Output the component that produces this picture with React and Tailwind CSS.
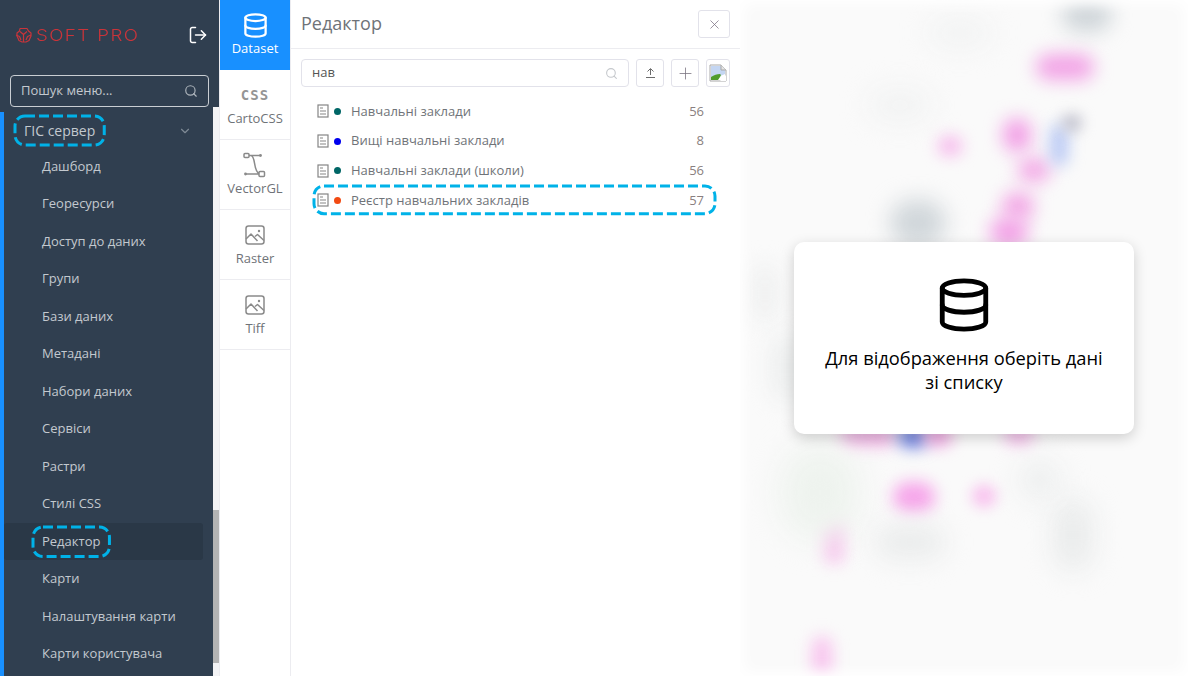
import React from 'react'
import { ChevronDown, Database, LogOut, Plus, Search, X } from 'lucide-react'

const menu = ['Дашборд', 'Георесурси', 'Доступ до даних', 'Групи', 'Бази даних', 'Метадані', 'Набори даних', 'Сервіси', 'Растри', 'Стилі CSS', 'Редактор', 'Карти', 'Налаштування карти', 'Карти користувача']

const rows = [
    { name: 'Навчальні заклади', count: 56, dot: 'bg-[#006666]' },
    { name: 'Вищі навчальні заклади', count: 8, dot: 'bg-[#0000ee]' },
    { name: 'Навчальні заклади (школи)', count: 56, dot: 'bg-[#006666]' },
    { name: 'Реєстр навчальних закладів', count: 57, dot: 'bg-[#f24a12]', marked: true },
]

const blobs = [
    'left-[322px] top-[-2px] w-[50px] h-[34px] bg-[#d0d6da] blur-[10px]',
    'left-[296px] top-[54px] w-[58px] h-[26px] bg-[#f2a4e6] blur-[9px]',
    'left-[263px] top-[118px] w-[28px] h-[34px] bg-[#f2a0e6] blur-[9px]',
    'left-[198px] top-[136px] w-[24px] h-[20px] bg-[#f6b8ec] blur-[8px]',
    'left-[278px] top-[158px] w-[32px] h-[24px] bg-[#f3a8e6] blur-[9px]',
    'left-[310px] top-[124px] w-[18px] h-[42px] bg-[#b8c8f4] blur-[8px]',
    'left-[322px] top-[114px] w-[20px] h-[18px] bg-[#c0c0cc] blur-[7px]',
    'left-[262px] top-[192px] w-[32px] h-[28px] bg-[#f3a8e6] blur-[9px]',
    'left-[250px] top-[218px] w-[38px] h-[28px] bg-[#f2a0e6] blur-[9px]',
    'left-[150px] top-[200px] w-[56px] h-[46px] bg-[#d0d6da] blur-[11px]',
    'left-[12px] top-[265px] w-[26px] h-[56px] bg-[#eff0f0] blur-[11px]',
    'left-[32px] top-[335px] w-[32px] h-[66px] bg-[#eceeee] blur-[12px]',
    'left-[100px] top-[426px] w-[56px] h-[20px] bg-[#f0b0e4] blur-[8px]',
    'left-[158px] top-[426px] w-[30px] h-[22px] bg-[#6b7fe0] blur-[8px]',
    'left-[184px] top-[426px] w-[28px] h-[20px] bg-[#ee9fdf] blur-[8px]',
    'left-[264px] top-[426px] w-[30px] h-[18px] bg-[#f3b6e8] blur-[8px]',
    'left-[153px] top-[482px] w-[42px] h-[30px] bg-[#f6a6ea] blur-[8px]',
    'left-[232px] top-[485px] w-[24px] h-[22px] bg-[#f8c0ee] blur-[7px]',
    'left-[84px] top-[520px] w-[20px] h-[44px] bg-[#f8c4ee] blur-[8px]',
    'left-[72px] top-[636px] w-[20px] h-[44px] bg-[#f8c4ee] blur-[8px]',
    'left-[40px] top-[445px] w-[80px] h-[95px] bg-[#eef3ee] blur-[16px]',
    'left-[135px] top-[525px] w-[70px] h-[34px] bg-[#eaecec] blur-[13px]',
    'left-[315px] top-[500px] w-[36px] h-[70px] bg-[#e8eaea] blur-[14px]',
    'left-[280px] top-[460px] w-[40px] h-[40px] bg-[#eceeee] blur-[14px]',
    'left-[130px] top-[90px] w-[60px] h-[30px] bg-[#f1f2f2] blur-[14px]',
    'left-[190px] top-[20px] w-[60px] h-[26px] bg-[#f1f2f2] blur-[14px]',
]

// annotation frame drawn over the highlighted items
function Dashed({ className }) {
    return (
        <span className={`absolute ${className}`}>
            <svg className="w-full h-full overflow-visible text-[#00b2e8]">
                <rect x="0" y="0" width="100%" height="100%" rx="10" fill="none" stroke="currentColor" strokeWidth="3" strokeDasharray="10 4" />
            </svg>
        </span>
    )
}

function DocIcon() {
    return (
        <svg width="12" height="14" viewBox="0 0 12 14" fill="none" className="shrink-0 text-[#858585]" stroke="currentColor">
            <rect x="1" y="1" width="10" height="12" strokeWidth="1.2" />
            <path d="M3 4h3M3 7h6M3 10h6" strokeWidth="1" />
        </svg>
    )
}

function PictureIcon() {
    return (
        <svg width="20" height="20" viewBox="0 0 20 20" fill="none" stroke="#8a8a8a" strokeWidth="1.500" strokeLinejoin="round">
            <rect x="1" y="1" width="18" height="18" rx="2.500" />
            <path d="M1 14l5-5 6.500 7M10 11.500l2.500-2 6.500 6" />
            <circle cx="14" cy="6" r="1.200" fill="#8a8a8a" stroke="none" />
        </svg>
    )
}

function NodesIcon() {
    return (
        <svg width="24" height="26" viewBox="0 0 24 26" fill="none" stroke="#8a8a8a" strokeWidth="1.500">
            <rect x="1" y="1.500" width="5" height="4" rx="1" />
            <rect x="16" y="19.500" width="5.500" height="5" rx="1" />
            <path d="M6 3.500h11M3 22h13M8 3.500c5 1 2 15 8 18" />
            <circle cx="17.500" cy="3.500" r="1.400" fill="#8a8a8a" stroke="none" />
            <circle cx="2.500" cy="22" r="1.400" fill="#8a8a8a" stroke="none" />
        </svg>
    )
}

function BrokenImage() {
    return (
        <svg width="18" height="18" viewBox="0 0 18 18">
            <path d="M1 1h11l5 5v11H1z" fill="#fff" stroke="#a8a8a8" />
            <path d="M2 2h9.500l4.500 4.500V10l-7 3-7 1z" fill="#c4d6f2" />
            <path d="M2 16v-3c3-2 6-3 9-3 2 1 0 3-2 6z" fill="#4f9c2c" />
            <path d="M12 1v5h5" fill="#e4e4e4" stroke="#a8a8a8" />
            <path d="M11 17l6-6v6z" fill="#fff" />
        </svg>
    )
}

function Tab({ icon, label, active }) {
    return (
        <div className={`h-[70px] flex flex-col items-center pt-[12px] text-[13px] border-b ${active ? 'bg-[#1890ff] text-white border-[#1890ff]' : 'bg-white text-[#6f7378] border-[#ececf0]'}`}>
            <div className="h-[26px] flex items-center justify-center">{icon}</div>
            <span className="leading-[20px]">{label}</span>
        </div>
    )
}

export default function App() {
    return (
        <div className="h-[676px] w-[1188px] flex overflow-hidden bg-white font-['Open_Sans',sans-serif]">
            {/* Sidebar */}
            <aside className="w-[219px] shrink-0 flex flex-col bg-[#303f50]">
                <div className="h-[107px] shrink-0 px-[10px]">
                    <div className="h-[70px] flex items-center justify-between pl-[5px] pr-[1px]">
                        <div className="flex items-center gap-[4px]">
                            <svg width="17" height="16" viewBox="0 0 17 16" fill="none" stroke="#c9343a" strokeWidth="1.200" strokeLinejoin="round">
                                <path d="M5 1.500h7l1.500 2.500 2.500 2v3l-2 4.500-3 1.500h-4l-3-1.500-2-4.500V6l2.500-2z" />
                                <path d="M5 4.500l3.500 3 3.500-3M8.500 7.500V15M1 8l3.500 1.500L6 13M16 8l-3.500 1.500L11 13" />
                            </svg>
                            <span className="font-['Inter',sans-serif] font-light text-[16px] leading-none tracking-[1.2px] text-[#c9343a] scale-x-[1.17] origin-left">SOFT PRO</span>
                        </div>
                        <LogOut size={20} strokeWidth={1.8} className="text-white -scale-x-100 rotate-180" />
                    </div>
                    <div className="mt-[5px] h-[32px] flex items-center justify-between px-[10px] border border-[#c9ced3] rounded-[4px] text-[13px] text-[#c3c9cf]">
                        <span>Пошук меню...</span>
                        <Search size={14} className="text-[#aeb5bc]" />
                    </div>
                </div>
                <div className="flex-1 flex min-h-0">
                    <nav className="flex-1 pt-[5px]">
                        <div className="h-full border-l-4 border-[#1890ff]">
                            <div className="h-[37px] -mb-[1.5px] flex items-center justify-between pl-[20px] pr-[21px] text-[14px] text-[#c3c9cf]">
                                <span className="relative">
                                    ГІС сервер
                                    <Dashed className="-left-[9px] -right-[9px] -top-[4px] -bottom-[4px]" />
                                </span>
                                <ChevronDown size={14} className="text-[#7f8a95]" />
                            </div>
                            {menu.map(item => (
                                <div key={item} className={`h-[37.5px] flex items-center pl-[38px] mr-[10px] text-[13px] rounded-[3px] text-[#c3c9cf] ${item === 'Редактор' ? 'bg-[#2a3847]' : ''}`}>
                                    <span className="relative">
                                        {item}
                                        {item === 'Редактор' && <Dashed className="-left-[9px] -right-[9px] -top-[5px] -bottom-[5px]" />}
                                    </span>
                                </div>
                            ))}
                        </div>
                    </nav>
                    {/* Scrollbar */}
                    <div className="w-[6px] shrink-0 bg-[#f3f3f5] flex flex-col">
                        <div className="h-[403px]" />
                        <div className="h-[153px] bg-[#b3b3b3]" />
                    </div>
                </div>
            </aside>

            {/* Tabs */}
            <div className="w-[72px] shrink-0 border-l border-r border-[#ececf0] bg-white">
                <Tab active icon={<Database size={27} strokeWidth={2} />} label="Dataset" />
                <Tab icon={<span className="font-['DejaVu_Sans_Mono',monospace] font-bold text-[14px] tracking-[1px] text-[#959595]">CSS</span>} label="CartoCSS" />
                <Tab icon={<NodesIcon />} label="VectorGL" />
                <Tab icon={<PictureIcon />} label="Raster" />
                <Tab icon={<PictureIcon />} label="Tiff" />
            </div>

            {/* Editor panel */}
            <section className="w-[449px] shrink-0 bg-white">
                <header className="h-[49px] flex items-center justify-between pl-[10px] pr-[10px] border-b border-[#ececf0]">
                    <h1 className="-mt-[2px] text-[18px] text-[#6f7378]">Редактор</h1>
                    <button className="w-[32px] h-[28px] flex items-center justify-center border border-[#e2e2ea] rounded-[3px] text-[#7a6f80]">
                        <X size={15} strokeWidth={1.2} />
                    </button>
                </header>
                <div className="flex items-center gap-[7px] pl-[10px] pr-[10px] pt-[10px]">
                    <div className="flex-1 h-[28px] flex items-center justify-between px-[10px] border border-[#e2e2ea] rounded-[4px] text-[13px] text-[#555]">
                        <span>нав</span>
                        <Search size={13} className="text-[#c5c8cc]" />
                    </div>
                    <button className="w-[28px] h-[28px] flex items-center justify-center border border-[#e2e2ea] rounded-[3px]">
                        <svg width="11" height="12" viewBox="0 0 11 12" fill="none" stroke="#6b6b6b" strokeWidth="1">
                            <path d="M1 10.500h9M5.500 8V2M2.500 4.500l3-3 3 3" />
                        </svg>
                    </button>
                    <button className="w-[28px] h-[28px] flex items-center justify-center border border-[#e2e2ea] rounded-[3px] text-[#7a7380]">
                        <Plus size={19} strokeWidth={1} />
                    </button>
                    <button className="w-[24px] h-[28px] flex items-center justify-center border border-[#e2e2ea] rounded-[3px] overflow-hidden">
                        <BrokenImage />
                    </button>
                </div>
                <ul className="pt-[9.5px] pl-[26px] pr-[36px]">
                    {rows.map(row => (
                        <li key={row.name} className="relative h-[29.7px] flex items-center text-[13px] text-[#6f7378]">
                            <DocIcon />
                            <span className={`w-[7px] h-[7px] rounded-full ml-[5px] mr-[10px] ${row.dot}`} />
                            <span className="flex-1">{row.name}</span>
                            <span className="text-[#8a7f80]">{row.count}</span>
                            {row.marked && <Dashed className="-left-[3.5px] -right-[10.5px] top-[0.5px] bottom-[1.5px]" />}
                        </li>
                    ))}
                </ul>
            </section>

            {/* Blurred map */}
            <main className="relative flex-1 bg-[#fafafa] overflow-hidden flex items-center justify-center">
                {blobs.map(blob => (
                    <div key={blob} className={`absolute rounded-full ${blob}`} />
                ))}
                <div className="absolute inset-0 shadow-[inset_0_0_14px_4px_white]" />
                <div className="relative w-[340px] h-[192px] flex flex-col items-center bg-white rounded-[10px] shadow-[0_4px_14px_rgba(0,0,0,0.18)] pt-[36px] px-[28px] text-center">
                    <Database size={58} strokeWidth={2} className="text-black -my-[2px]" />
                    <p className="mt-[14px] text-[18.3px] leading-[24px] text-black">Для відображення оберіть дані зі списку</p>
                </div>
            </main>
        </div>
    )
}
